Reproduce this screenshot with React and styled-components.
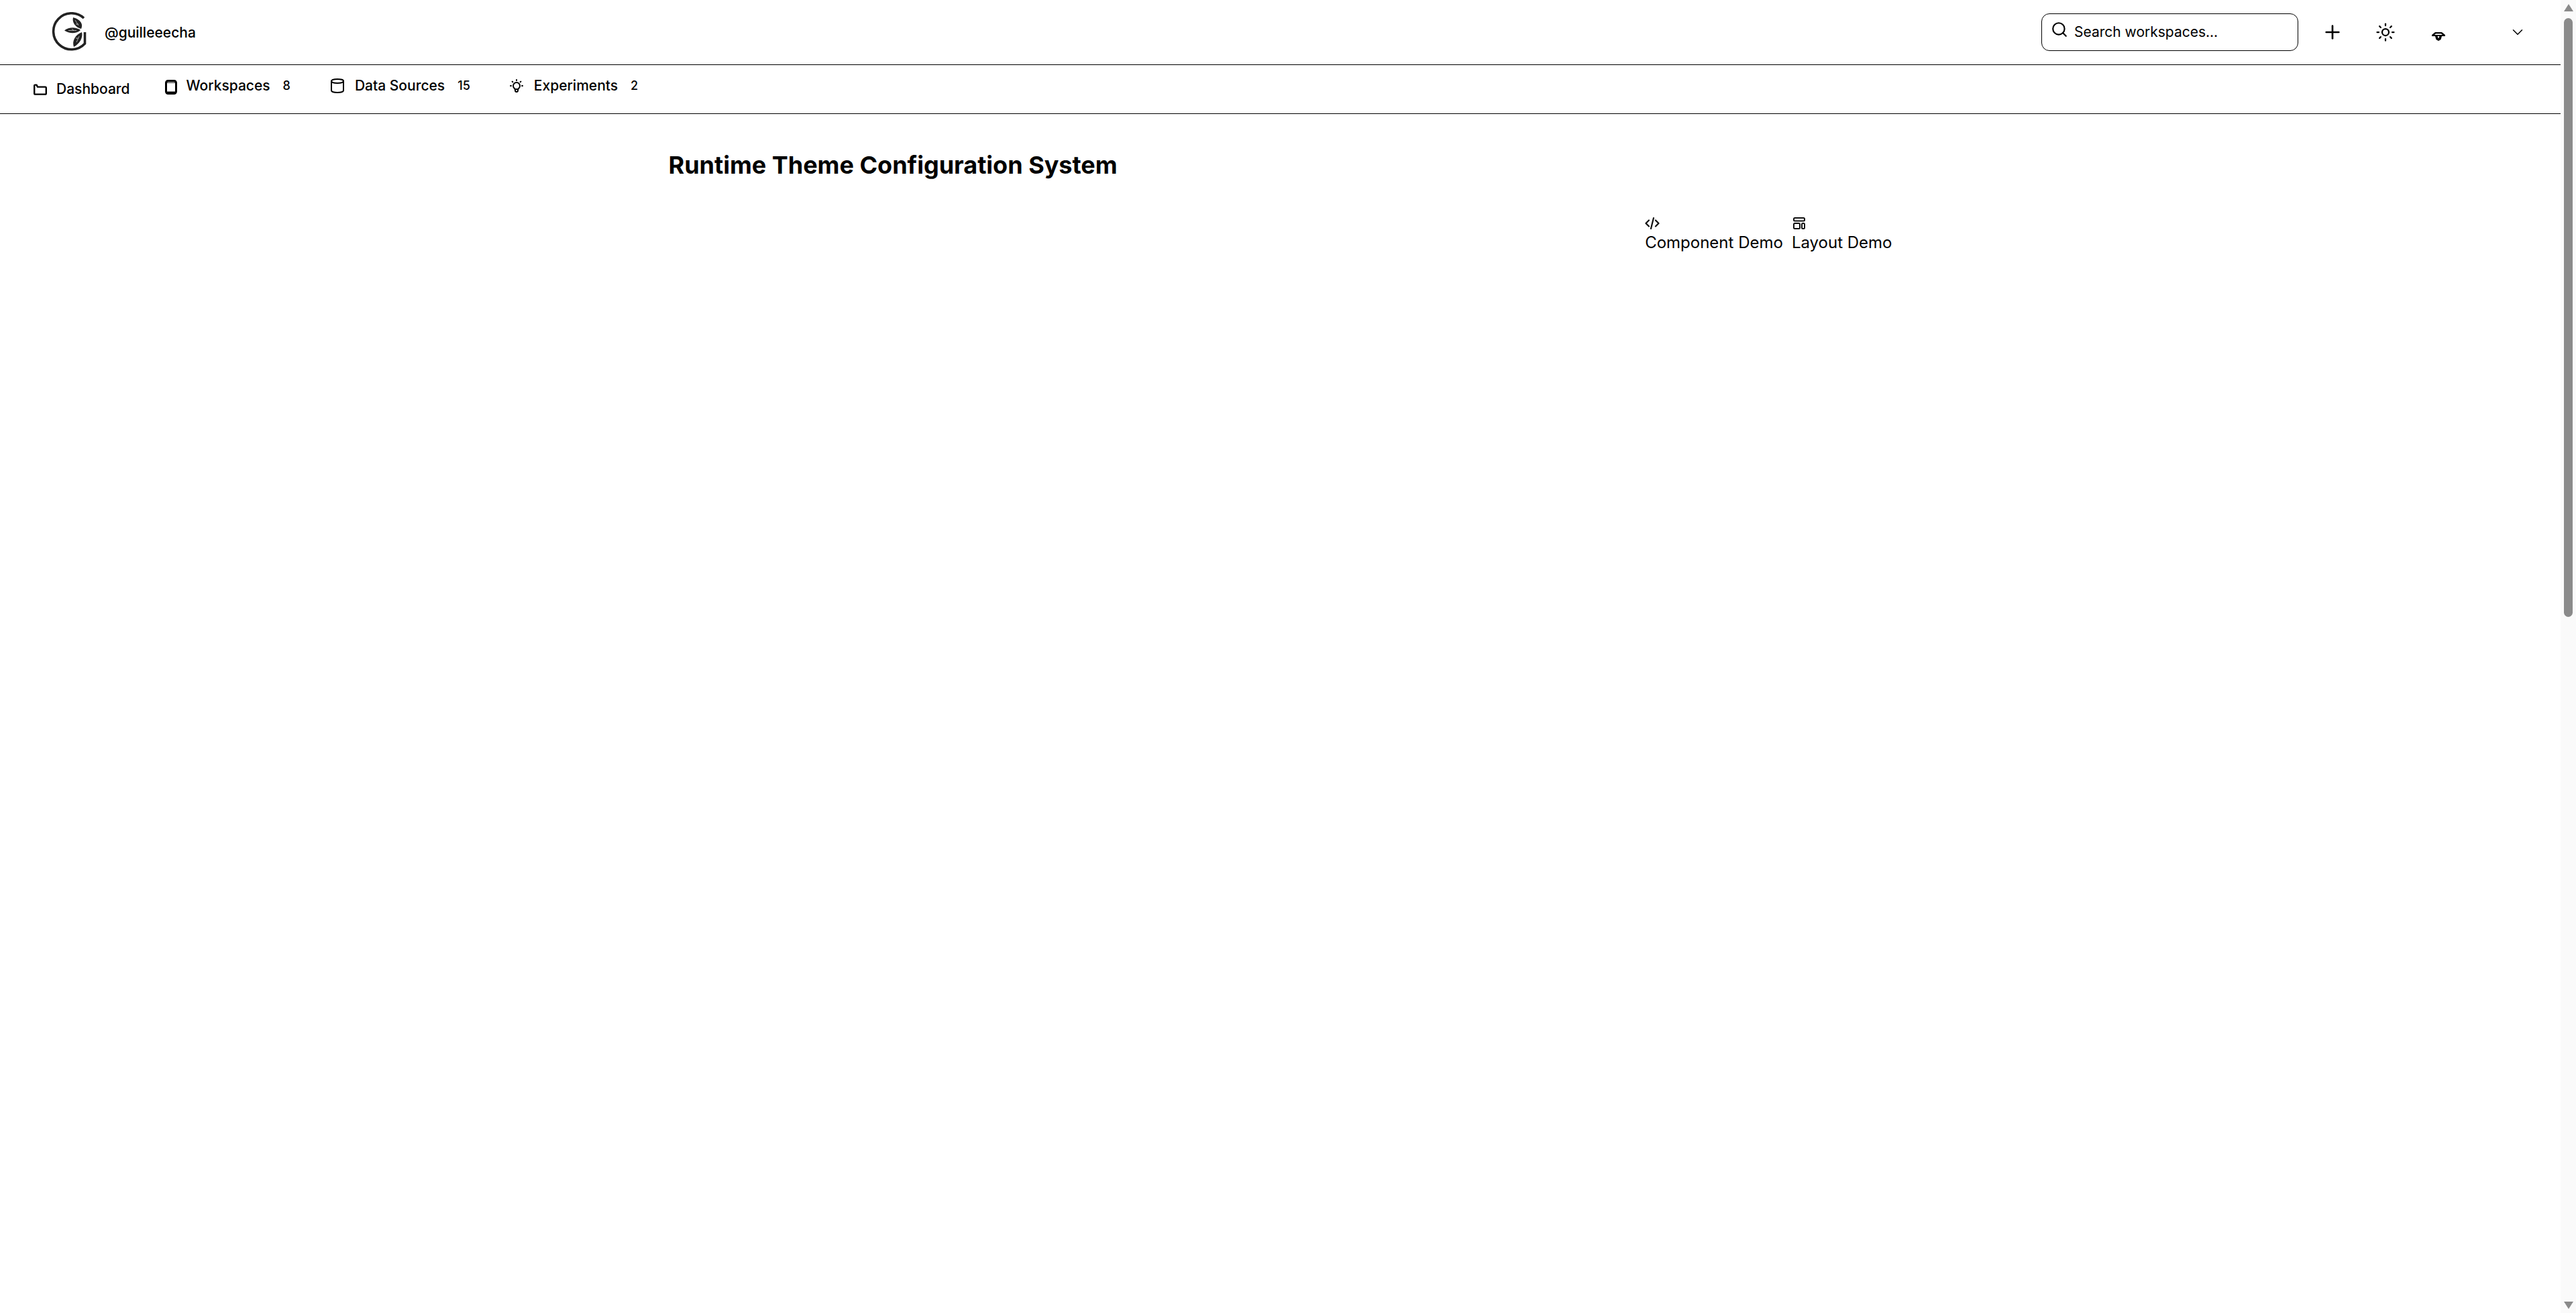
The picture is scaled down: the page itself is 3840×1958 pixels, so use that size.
import React from 'react';
import styled, { createGlobalStyle } from 'styled-components';
import { ChevronDown, Cylinder, Plus, Search, Sun } from 'lucide-react';
import { TbBulb } from 'react-icons/tb';

const GlobalStyle = createGlobalStyle`
  html, body {
    margin: 0;
    padding: 0;
    height: 100%;
    overflow: hidden;
    background: #fff;
    color: #000;
    font-family: Inter, "Liberation Sans", sans-serif;
  }
`;

const Shell = styled.div`
  height: 100vh;
  display: flex;
`;

const Content = styled.div`
  flex: 1;
  min-width: 0;
  display: flex;
  flex-direction: column;
`;

const ScrollRail = styled.div`
  width: 23px;
  padding: 6px 0;
  box-sizing: border-box;
  display: flex;
  flex-direction: column;
  align-items: center;
  background: #fafafa;
`;

const ScrollArrow = styled.div`
  width: 0;
  height: 0;
  margin-top: ${(p) => (p.$down ? 'auto' : 0)};
  border-left: 7.5px solid transparent;
  border-right: 7.5px solid transparent;
  border-bottom: ${(p) => (p.$down ? 'none' : '11px solid #8a8a8a')};
  border-top: ${(p) => (p.$down ? '11px solid #8a8a8a' : 'none')};
`;

const ScrollThumb = styled.div`
  width: 13px;
  height: 893px;
  margin-top: 10px;
  border-radius: 7px;
  background: #8a8a8a;
`;

const Header = styled.header`
  height: 96px;
  padding: 0 25px 0 76px;
  display: flex;
  align-items: center;
  border-bottom: 1px solid #000;
`;

const Brand = styled.div`
  display: flex;
  align-items: center;
  gap: 26px;
  font-size: 21px;
  font-weight: 500;
  flex: 1;
`;

const SearchBox = styled.div`
  width: 383px;
  height: 56px;
  box-sizing: border-box;
  padding: 10px 13px;
  display: flex;
  gap: 9px;
  border: 1px solid #000;
  border-radius: 12px;
  font-size: 21px;
  line-height: 28px;
`;

const SearchText = styled.span`
  padding-top: 3px;
`;

const IconButton = styled.div`
  width: 79px;
  height: 60px;
  margin-left: ${(p) => p.$gap || 0}px;
  padding-top: ${(p) => p.$drop || 0}px;
  box-sizing: border-box;
  display: flex;
  align-items: center;
  justify-content: center;
`;

const Nav = styled.nav`
  height: 72px;
  padding-left: 50px;
  display: flex;
  border-bottom: 1px solid #000;
`;

const NavItem = styled.a`
  display: flex;
  align-items: center;
  gap: 14px;
  margin-right: ${(p) => p.$after}px;
  padding-bottom: ${(p) => (p.$plain ? 0 : 10)}px;
  font-size: 21px;
  font-weight: 500;
  line-height: 28px;
`;

const Count = styled.span`
  margin-left: 5px;
  font-size: 18px;
  line-height: 24px;
`;

const Main = styled.main`
  width: 1824px;
  margin: 0 auto;
  padding-top: 52px;
`;

const Title = styled.h1`
  margin: 0;
  font-size: 36px;
  font-weight: 700;
  line-height: 48px;
`;

const Tabs = styled.div`
  margin-top: 50px;
  display: flex;
  justify-content: flex-end;
  gap: 13px;
`;

const Tab = styled.div`
  display: flex;
  flex-direction: column;
  align-items: flex-start;
  font-size: 24px;
  line-height: 32px;
`;

const TabIcon = styled.span`
  height: 26px;
  display: flex;
  align-items: center;
`;

const Logo = () => (
  <svg width="54" height="60" viewBox="0 0 54 60">
    <path d="M49 9 A27 27 0 1 0 50.5 47 V30" fill="none" stroke="#222" strokeWidth="3.6" />
    <path d="M45 25 C37 23 31 16 33 8 C41 10 49 16 45 25Z" fill="#222" />
    <path d="M44 27 C37 33 27 32 20 27.5 C27 22 37 22 44 27Z" fill="#222" />
    <path d="M46 30 C48 38 43 47 34 52 C31 43 36 34 46 30Z" fill="#222" />
    <path d="M36 12 L41 20 M37 18 H41 M26 27.5 H38 M31 25 L34 27.5 M38 45 L42 36 M37 39 H41" stroke="#ccc" strokeWidth="0.8" fill="none" />
  </svg>
);

const FolderIcon = () => (
  <svg width="20" height="17" viewBox="0 0 20 17" fill="none" stroke="#000" strokeWidth="2.4" strokeLinejoin="round">
    <path d="M1.2 2.5 V14.2 Q1.2 15.6 2.6 15.6 H17.4 Q18.8 15.6 18.8 14.2 V6 Q18.8 4.6 17.4 4.6 H6 L4.5 1.6 H2.2 Q1.2 1.6 1.2 2.5Z" />
  </svg>
);

const TabletIcon = () => (
  <svg width="18" height="26" viewBox="0 -4 18 26" fill="none" stroke="#000" strokeWidth="3">
    <rect x="1.5" y="1.5" width="15" height="19" rx="3" />
    <path d="M1.5 18.5 H16.5" strokeWidth="2" />
    <path d="M3 4.2 H15" strokeWidth="1" />
  </svg>
);

const CodeIcon = () => (
  <svg width="22" height="20" viewBox="0 0 22 20" fill="none" stroke="#111" strokeWidth="2.2" strokeLinecap="round" strokeLinejoin="round">
    <path d="M6 5.5 L1.5 10 L6 14.5" />
    <path d="M16 5.5 L20.5 10 L16 14.5" />
    <path d="M13 2 L9 18" />
  </svg>
);

const LayoutIcon = () => (
  <svg width="20" height="18" viewBox="-2 0 20 18" fill="none" stroke="#111" strokeWidth="2">
    <rect x="1" y="1" width="16" height="4.5" rx="1.5" />
    <rect x="1" y="9" width="9" height="8" rx="1.5" />
    <rect x="13" y="9" width="4" height="8" rx="1.5" />
  </svg>
);

const AvatarGlyph = () => (
  <svg width="20" height="13" viewBox="0 0 20 13">
    <path d="M5 0 H15 L20 4 V6 H15 L13.5 11 L10 13 L6.5 11 L5 6 H0 V4Z" fill="#000" />
    <path d="M4 4 L6 2.2 H14 L16 4Z M8.5 6 H11.5 L10 9.5Z" fill="#fff" />
  </svg>
);

const App = () => (
  <Shell>
    <GlobalStyle />
    <Content>
      <Header>
        <Brand>
          <Logo />
          <span>@guilleeecha</span>
        </Brand>
        <SearchBox>
          <Search size={26} strokeWidth={2} />
          <SearchText>Search workspaces...</SearchText>
        </SearchBox>
        <IconButton $gap={11}>
          <Plus size={32} strokeWidth={2} />
        </IconButton>
        <IconButton>
          <Sun size={30} strokeWidth={1.8} />
        </IconButton>
        <IconButton $drop={12}>
          <AvatarGlyph />
        </IconButton>
        <IconButton $gap={39}>
          <ChevronDown size={26} strokeWidth={1.4} />
        </IconButton>
      </Header>
      <Nav>
        <NavItem $plain $after={52}>
          <FolderIcon />
          Dashboard
        </NavItem>
        <NavItem $after={58}>
          <TabletIcon />
          Workspaces
          <Count>8</Count>
        </NavItem>
        <NavItem $after={57}>
          <Cylinder size={24} strokeWidth={2} />
          Data Sources
          <Count>15</Count>
        </NavItem>
        <NavItem $after={0}>
          <TbBulb size={24} />
          Experiments
          <Count>2</Count>
        </NavItem>
      </Nav>
      <Main>
        <Title>Runtime Theme Configuration System</Title>
        <Tabs>
          <Tab>
            <TabIcon>
              <CodeIcon />
            </TabIcon>
            Component Demo
          </Tab>
          <Tab>
            <TabIcon>
              <LayoutIcon />
            </TabIcon>
            Layout Demo
          </Tab>
        </Tabs>
      </Main>
    </Content>
    <ScrollRail>
      <ScrollArrow />
      <ScrollThumb />
      <ScrollArrow $down />
    </ScrollRail>
  </Shell>
);

export default App;
